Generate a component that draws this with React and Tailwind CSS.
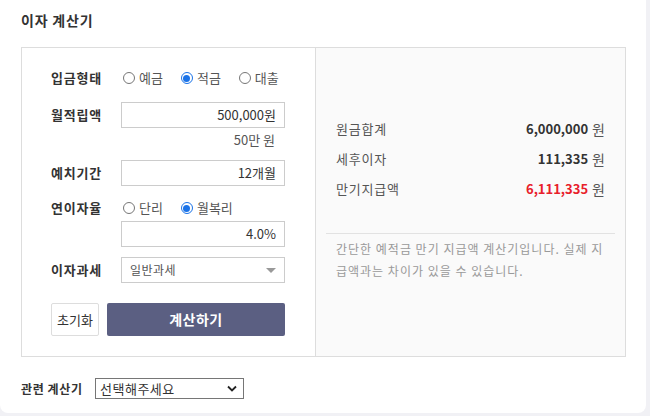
import React from 'react';

function Radio({ checked, label }) {
  return (
    <span className="flex items-center gap-[4px] text-[13px] text-[#555]">
      {checked ? (
        <span className="flex h-[12px] w-[12px] items-center justify-center rounded-full border border-[#1a73e8]">
          <span className="h-[7px] w-[7px] rounded-full bg-[#1a73e8]" />
        </span>
      ) : (
        <span className="h-[12px] w-[12px] rounded-full border border-[#767676] bg-white" />
      )}
      <span>{label}</span>
    </span>
  );
}

function Row({ label, children, className = '' }) {
  return (
    <div className={`flex items-center ${className}`}>
      <div className="w-[70px] text-[13px] font-bold tracking-[0.8px] text-[#333]">{label}</div>
      <div className="w-[164px]">{children}</div>
    </div>
  );
}

function Field({ children }) {
  return (
    <div className="flex h-[26px] items-center justify-end border border-[#ccc] bg-white pr-[8px] text-[13px] text-[#333]">
      {children}
    </div>
  );
}

function Result({ label, value, red }) {
  return (
    <div className="flex h-[30px] items-center justify-between">
      <span className="text-[13px] tracking-[0.8px] text-[#555]">{label}</span>
      <span className="flex items-center gap-[4px]">
        <span className={`text-[13px] font-bold ${red ? 'text-[#e8202a]' : 'text-[#333]'}`}>{value}</span>
        <span className="text-[14px] text-[#555]">원</span>
      </span>
    </div>
  );
}

export default function App() {
  return (
    <div
      className="h-[416px] w-[650px] bg-[#f1f1f5]"
      style={{ fontFamily: '"Noto Sans CJK KR", "Noto Sans", sans-serif' }}
    >
      <div className="h-[413px] w-[646px] rounded-b-[8px] bg-white pl-[21px] pr-[20px]">
        <div className="flex h-[40px] items-center pt-[1px] text-[14px] font-bold tracking-[0.8px] text-[#333]">이자 계산기</div>

        <div className="mt-[7px] flex h-[310px] border border-[#ddd]">
          {/* left form */}
          <div className="w-[294px] border-r border-[#ddd] pl-[29px] pt-[17px]">
            <Row label="입금형태" className="h-[26px]">
              <div className="flex items-center gap-[18px] pl-[2px]">
                <Radio label="예금" />
                <Radio checked label="적금" />
                <Radio label="대출" />
              </div>
            </Row>
            <Row label="월적립액" className="mt-[11px]">
              <Field>500,000원</Field>
            </Row>
            <div className="flex h-[32px] w-[234px] justify-end pr-[10px] pt-[2px] text-[13px] leading-[20px] text-[#555]">
              50만 원
            </div>
            <Row label="예치기간">
              <Field>12개월</Field>
            </Row>
            <Row label="연이자율" className="mt-[9px] h-[26px]">
              <div className="flex items-center gap-[18px] pl-[2px]">
                <Radio label="단리" />
                <Radio checked label="월복리" />
              </div>
            </Row>
            <Row label="">
              <Field>4.0%</Field>
            </Row>
            <Row label="이자과세" className="mt-[10px]">
              <div className="flex h-[26px] items-center justify-between border border-[#ccc] bg-white pl-[8px] pr-[8px] text-[12px] tracking-[0.5px] text-[#555]">
                <span>일반과세</span>
                <span className="h-0 w-0 border-x-[5px] border-t-[5px] border-x-transparent border-t-[#999]" />
              </div>
            </Row>
            <div className="mt-[20px] flex h-[33px] gap-[8px]">
              <button className="w-[48px] rounded-[2px] border border-[#ddd] bg-white text-[13px] text-[#333]">초기화</button>
              <button className="w-[178px] rounded-[2px] bg-[#5b5f82] text-[14px] font-bold tracking-[0.5px] text-white">계산하기</button>
            </div>
          </div>

          {/* right results */}
          <div className="flex-1 bg-[#fafafa] px-[10px]">
            <div className="border-b border-[#e2e2e2] px-[10px] pb-[29px] pt-[66px]">
              <Result label="원금합계" value="6,000,000" />
              <Result label="세후이자" value="111,335" />
              <Result label="만기지급액" value="6,111,335" red />
            </div>
            <p className="break-all px-[10px] pt-[4px] text-[12px] leading-[22px] tracking-[1px] text-[#999]">
              간단한 예적금 만기 지급액 계산기입니다. 실제 지급액과는 차이가 있을 수 있습니다.
            </p>
          </div>
        </div>

        <div className="mt-[21px] flex items-center">
          <span className="w-[74px] text-[12px] font-bold tracking-[0.6px] text-[#333]">관련 계산기</span>
          <div className="flex h-[21px] w-[149px] items-center justify-between border border-[#767676] bg-white pl-[4px] pr-[6px] text-[13px] tracking-[0.5px] text-[#333]">
            <span>선택해주세요</span>
            <svg width="10" height="7" viewBox="0 0 10 7" fill="none">
              <path d="M1 1.5 L5 5.5 L9 1.5" stroke="#222" strokeWidth="1.8" />
            </svg>
          </div>
        </div>
      </div>
    </div>
  );
}
